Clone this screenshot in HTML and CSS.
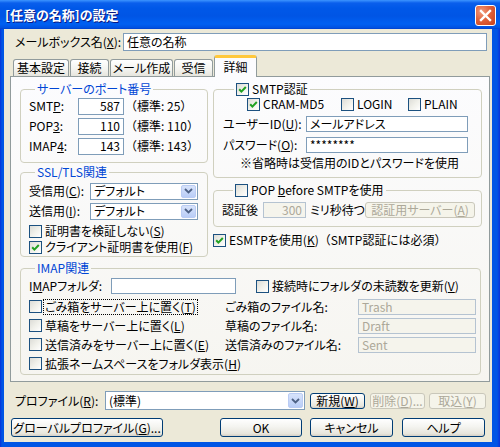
FILE: index.html
```html
<!DOCTYPE html>
<html lang="ja">
<head>
<meta charset="utf-8">
<title>[任意の名称]の設定</title>
<link rel="stylesheet" href="styles.css">
</head>
<body>
<div class="window">
  <div class="titlebar">
    <span class="title">[任意の名称]の設定</span>
    <span class="close"><svg width="13" height="13" viewBox="0 0 13 13"><path d="M2 2 L11 11 M11 2 L2 11" stroke="#fff" stroke-width="2.4" stroke-linecap="square"/></svg></span>
  </div>
  <div class="client">
    <div class="name-row">
      <span class="name-label">メールボックス名(<u>X</u>):</span>
      <span class="edit name-edit">任意の名称</span>
    </div>
    <div class="tabs">
      <span class="tab t1">基本設定</span>
      <span class="tab t2">接続</span>
      <span class="tab t3">メール作成</span>
      <span class="tab t4">受信</span>
      <span class="tab t5 active">詳細</span>
    </div>
    <div class="panel">
      <div class="cols">
        <div class="col-left">
          <fieldset class="group g-port">
            <legend>サーバーのポート番号</legend>
            <div class="port-row"><span class="port-label">SMT<u>P</u>:</span><span class="edit num">587</span><span class="std">（標準: 25）</span></div>
            <div class="port-row"><span class="port-label">POP<u>3</u>:</span><span class="edit num">110</span><span class="std">（標準: 110）</span></div>
            <div class="port-row"><span class="port-label">IMAP<u>4</u>:</span><span class="edit num">143</span><span class="std">（標準: 143）</span></div>
          </fieldset>
          <fieldset class="group g-ssl">
            <legend>SSL/TLS関連</legend>
            <div class="ssl-row"><span class="ssl-label">受信用(<u>C</u>):</span><span class="combo ssl-combo"><span class="combo-text">デフォルト</span><span class="combo-btn"><svg width="9" height="6" viewBox="0 0 9 6"><path d="M1 1 L4.5 4.5 L8 1" fill="none" stroke="#4D6185" stroke-width="1.8"/></svg></span></span></div>
            <div class="ssl-row"><span class="ssl-label">送信用(<u>I</u>):</span><span class="combo ssl-combo"><span class="combo-text">デフォルト</span><span class="combo-btn"><svg width="9" height="6" viewBox="0 0 9 6"><path d="M1 1 L4.5 4.5 L8 1" fill="none" stroke="#4D6185" stroke-width="1.8"/></svg></span></span></div>
            <div class="check-row first"><span class="cb"></span><span class="cb-text">証明書を検証しない(<u>S</u>)</span></div>
            <div class="check-row"><span class="cb checked"><svg width="11" height="11" viewBox="0 0 11 11"><path d="M2.2 5.2 L4.4 7.6 L8.8 3" fill="none" stroke="#21A121" stroke-width="2"/></svg></span><span class="cb-text">クライアント証明書を使用(<u>F</u>)</span></div>
          </fieldset>
        </div>
        <div class="col-right">
          <fieldset class="group g-smtp">
            <legend class="cb-legend"><span class="cb checked"><svg width="11" height="11" viewBox="0 0 11 11"><path d="M2.2 5.2 L4.4 7.6 L8.8 3" fill="none" stroke="#21A121" stroke-width="2"/></svg></span><span class="cb-text">SMTP認証</span></legend>
            <div class="auth-row">
              <span class="auth-item a-cram"><span class="cb checked"><svg width="11" height="11" viewBox="0 0 11 11"><path d="M2.2 5.2 L4.4 7.6 L8.8 3" fill="none" stroke="#21A121" stroke-width="2"/></svg></span><span class="cb-text">CRAM-MD5</span></span>
              <span class="auth-item a-login"><span class="cb"></span><span class="cb-text">LOGIN</span></span>
              <span class="auth-item a-plain"><span class="cb"></span><span class="cb-text">PLAIN</span></span>
            </div>
            <div class="cred-row r-id"><span class="cred-label">ユーザーID(<u>U</u>):</span><span class="edit cred-edit">メールアドレス</span></div>
            <div class="cred-row r-pw"><span class="cred-label">パスワード(<u>O</u>):</span><span class="edit cred-edit pw">********</span></div>
            <div class="note">※省略時は受信用のIDとパスワードを使用</div>
          </fieldset>
          <fieldset class="group g-pop">
            <legend class="cb-legend"><span class="cb"></span><span class="cb-text">POP <u>b</u>efore SMTPを使用</span></legend>
            <div class="pop-row">
              <span class="pop-label">認証後</span>
              <span class="edit num disabled pop-edit">300</span>
              <span class="pop-wait">ミリ秒待つ</span>
              <span class="btn disabled pop-btn">認証用サーバー(<u>A</u>)</span>
            </div>
          </fieldset>
          <div class="esmtp-row"><span class="cb checked"><svg width="11" height="11" viewBox="0 0 11 11"><path d="M2.2 5.2 L4.4 7.6 L8.8 3" fill="none" stroke="#21A121" stroke-width="2"/></svg></span><span class="cb-text">ESMTPを使用(<u>K</u>)<span class="wide-paren">（SMTP認証には必須）</span></span></div>
        </div>
      </div>
      <fieldset class="group g-imap">
        <legend>IMAP関連</legend>
        <div class="folder-row">
          <span class="folder-label">I<u>M</u>APフォルダ:</span>
          <span class="edit folder-edit"></span>
          <span class="folder-check"><span class="cb"></span><span class="cb-text">接続時にフォルダの未読数を更新(<u>V</u>)</span></span>
        </div>
        <div class="imap-grid">
          <div class="imap-check"><span class="cb"></span><span class="cb-text focus">ごみ箱をサーバー上に置く(<u>T</u>)</span></div>
          <div class="imap-label">ごみ箱のファイル名:</div>
          <div class="edit disabled imap-edit">Trash</div>
          <div class="imap-check"><span class="cb"></span><span class="cb-text">草稿をサーバー上に置く(<u>L</u>)</span></div>
          <div class="imap-label">草稿のファイル名:</div>
          <div class="edit disabled imap-edit">Draft</div>
          <div class="imap-check"><span class="cb"></span><span class="cb-text">送信済みをサーバー上に置く(<u>E</u>)</span></div>
          <div class="imap-label">送信済みのファイル名:</div>
          <div class="edit disabled imap-edit">Sent</div>
          <div class="imap-check wide"><span class="cb"></span><span class="cb-text">拡張ネームスペースをフォルダ表示(<u>H</u>)</span></div>
        </div>
      </fieldset>
    </div>
    <div class="profile-row">
      <span class="profile-label">プロファイル(<u>R</u>):</span>
      <span class="combo profile-combo"><span class="combo-text">(標準)</span><span class="combo-btn"><svg width="9" height="6" viewBox="0 0 9 6"><path d="M1 1 L4.5 4.5 L8 1" fill="none" stroke="#4D6185" stroke-width="1.8"/></svg></span></span>
      <span class="btn b-new">新規(<u>W</u>)</span>
      <span class="btn disabled b-del">削除(<u>D</u>)...</span>
      <span class="btn disabled b-imp">取込(<u>Y</u>)</span>
    </div>
    <div class="button-row">
      <span class="btn b-global">グローバルプロファイル(<u>G</u>)...</span>
      <span class="btn b-ok">OK</span>
      <span class="btn b-cancel">キャンセル</span>
      <span class="btn b-help">ヘルプ</span>
    </div>
  </div>
</div>
</body>
</html>
```

FILE: styles.css
```css
* { box-sizing: border-box; }
html, body { margin: 0; padding: 0; }
body {
  width: 500px;
  height: 447px;
  overflow: hidden;
  font-family: "Noto Sans CJK JP", "Noto Sans", sans-serif;
  font-size: 12px;
  line-height: 14px;
  font-feature-settings: "palt";
  color: #000;
  background: #ECE9D8;
}
u { text-decoration: underline; text-underline-offset: 1px; }

.window {
  width: 500px;
  height: 447px;
  display: flex;
  flex-direction: column;
  background: linear-gradient(to right, #0831D9 0, #0055E5 2px, #0055E5 497px, #0831D9 500px);
}
.titlebar {
  height: 29px;
  flex: none;
  display: flex;
  align-items: center;
  justify-content: space-between;
  padding: 0 4px 0 5px;
  background: linear-gradient(to bottom, #3D95FF 0, #0A5FEC 3px, #0058E8 8px, #0055E5 16px, #0060F2 24px, #0050E0 28px, #003DC8 29px);
}
.title {
  color: #fff;
  font-weight: bold;
  font-size: 13px;
  text-shadow: 1px 1px 0 #0A1883;
  margin-top: 1px;
}
.close {
  width: 21px;
  height: 21px;
  border: 1px solid #fff;
  border-radius: 3px;
  background: radial-gradient(circle at 30% 30%, #F29B7E 0, #E0623C 45%, #C8401A 100%);
  display: flex;
  align-items: center;
  justify-content: center;
  margin-top: 1px;
}

.client {
  flex: 1;
  margin: 0 8px 5px 4px;
  background: #ECE9D8;
  padding-top: 4px;
}

.edit {
  display: flex;
  align-items: center;
  background: #fff;
  border: 1px solid #7F9DB9;
  padding: 0 3px;
  white-space: nowrap;
}
.edit.num { justify-content: flex-end; }
.edit.disabled {
  background: #F5F4EC;
  border-color: #B5C3D1;
  color: #ACA899;
}

.name-row { display: flex; align-items: center; height: 18px; padding-left: 11px; }
.name-label { width: 108px; }
.name-edit { width: 364px; height: 18px; }

.tabs {
  display: flex;
  align-items: flex-end;
  height: 21px;
  margin-top: 4px;
  padding-left: 9px;
}
.tab {
  height: 17px;
  border: 1px solid #919B9C;
  border-bottom: none;
  border-radius: 3px 3px 0 0;
  background: linear-gradient(to bottom, #FFFFFF, #F3F3EF 60%, #E6E5DD);
  text-align: center;
  line-height: 16px;
  margin-right: 1px;
}
.t1 { width: 56px; }
.t2 { width: 39px; }
.t3 { width: 63px; }
.t4 { width: 39px; }
.t5 { width: 43px; }
.tab.active {
  height: 22px;
  margin-bottom: -1px;
  border-top: 3px solid #FFC83C;
  box-shadow: inset 0 -1px 0 #FCFCFE;
  background: #FCFCFE;
  line-height: 17px;
  position: relative;
  z-index: 1;
}

.panel {
  margin-left: 6px;
  width: 480px;
  height: 306px;
  border: 1px solid #919B9C;
  background: linear-gradient(to bottom, #FCFCFE, #F6F5F0);
  padding: 5px 0 0 9px;
}
.cols { display: flex; gap: 5px; align-items: flex-start; }
.col-left { width: 188px; display: flex; flex-direction: column; }
.col-right { width: 269px; display: flex; flex-direction: column; }

.group {
  margin: 0;
  min-width: 0;
  border: 1px solid #D0D0BF;
  border-radius: 4px;
  padding: 0 0 0 8px;
}
.group legend {
  padding: 0 2px;
  margin-left: 6px;
  line-height: 14px;
  height: 14px;
  color: #0046D5;
}
.group legend.cb-legend {
  color: #000;
  margin-left: 11px;
  display: flex;
  align-items: center;
}

.cb {
  width: 13px;
  height: 13px;
  flex: none;
  border: 1px solid #1C5180;
  background: linear-gradient(135deg, #DCDCD7 0, #F0F0EA 50%, #FFFFFF 100%);
  display: inline-flex;
  align-items: center;
  justify-content: center;
}
.cb-text { margin-left: 3px; white-space: nowrap; }

.g-port { padding-bottom: 6px; }
.port-row { display: flex; align-items: center; height: 20px; }
.port-label { width: 49px; }
.port-row .edit { width: 46px; height: 17px; }
.std { margin-left: 1px; font-feature-settings: normal; }
.wide-paren { font-feature-settings: normal; }

.g-ssl { margin-top: 2px; padding-top: 2px; padding-bottom: 1px; }
.ssl-row { display: flex; align-items: center; height: 20px; }
.ssl-label { width: 61px; }
.combo {
  display: flex;
  align-items: stretch;
  border: 1px solid #7F9DB9;
  background: #fff;
}
.combo-text { flex: 1; padding-left: 3px; display: flex; align-items: center; white-space: nowrap; }
.combo-btn {
  width: 15px;
  margin: 1px;
  border: 1px solid #BACCF4;
  border-radius: 2px;
  background: linear-gradient(to bottom, #D7E3FB, #B9CDF7);
  display: flex;
  align-items: center;
  justify-content: center;
}
.ssl-combo { width: 108px; height: 17px; }
.check-row { display: flex; align-items: center; height: 16px; }
.check-row.first { margin-top: 2px; }

.g-smtp { padding: 0 0 6px 9px; }
.auth-row { display: flex; align-items: center; height: 16px; padding-left: 24px; }
.auth-item { display: flex; align-items: center; }
.a-cram { width: 94px; }
.a-login { width: 67px; }
.cred-row { display: flex; align-items: center; height: 20px; }
.r-id { margin-top: 2px; }
.r-pw { margin-top: 1px; }
.cred-label { width: 83px; }
.cred-edit { width: 162px; height: 16px; }
.note { height: 16px; display: flex; align-items: center; padding-left: 17px; }

.g-pop { margin-top: 5px; padding: 3px 0 6px 8px; }
.pop-row { display: flex; align-items: center; height: 20px; }
.pop-label { width: 41px; }
.pop-edit { width: 43px; height: 16px; }
.pop-wait { margin-left: 4px; width: 55px; }
.btn {
  display: flex;
  align-items: center;
  justify-content: center;
  border: 1px solid #003C74;
  border-radius: 3px;
  background: linear-gradient(to bottom, #FFFFFF 0, #F4F4F0 45%, #E8E6DD 85%, #D6D0C5 100%);
  white-space: nowrap;
}
.btn.disabled {
  border-color: #C9C7BA;
  color: #ACA899;
  background: #F5F4EA;
}
.pop-btn { width: 110px; height: 16px; }

.esmtp-row { display: flex; align-items: center; height: 14px; margin-top: 6px; }

.g-imap { width: 461px; margin-top: 4px; padding: 1px 0 1px 8px; }
.folder-row { display: flex; align-items: center; height: 20px; }
.folder-label { width: 82px; }
.folder-edit { width: 125px; height: 16px; }
.folder-check { display: flex; align-items: center; margin-left: 20px; }
.imap-grid {
  margin-top: 1px;
  display: grid;
  grid-template-columns: 196px 133px 118px;
  grid-auto-rows: 19px;
  align-items: center;
}
.imap-check { display: flex; align-items: center; }
.imap-check.wide { grid-column: 1 / 4; }
.imap-edit { height: 16px; }
.focus { outline: 1px dotted #000; outline-offset: 0; padding: 0 1px; margin-left: 2px; }

.profile-row { display: flex; align-items: center; height: 19px; margin-top: 9px; padding-left: 11px; }
.profile-label { width: 90px; }
.profile-combo { width: 200px; height: 19px; }
.b-new { width: 55px; height: 16px; margin-left: 5px; }
.b-del { width: 55px; height: 16px; margin-left: 5px; }
.b-imp { width: 57px; height: 16px; margin-left: 4px; }

.button-row { display: flex; align-items: center; height: 19px; margin-top: 8px; padding-left: 7px; }
.button-row .btn { height: 19px; }
.b-global { width: 152px; }
.b-ok { width: 82px; margin-left: 57px; }
.b-cancel { width: 83px; margin-left: 8px; }
.b-help { width: 83px; margin-left: 9px; }
```
